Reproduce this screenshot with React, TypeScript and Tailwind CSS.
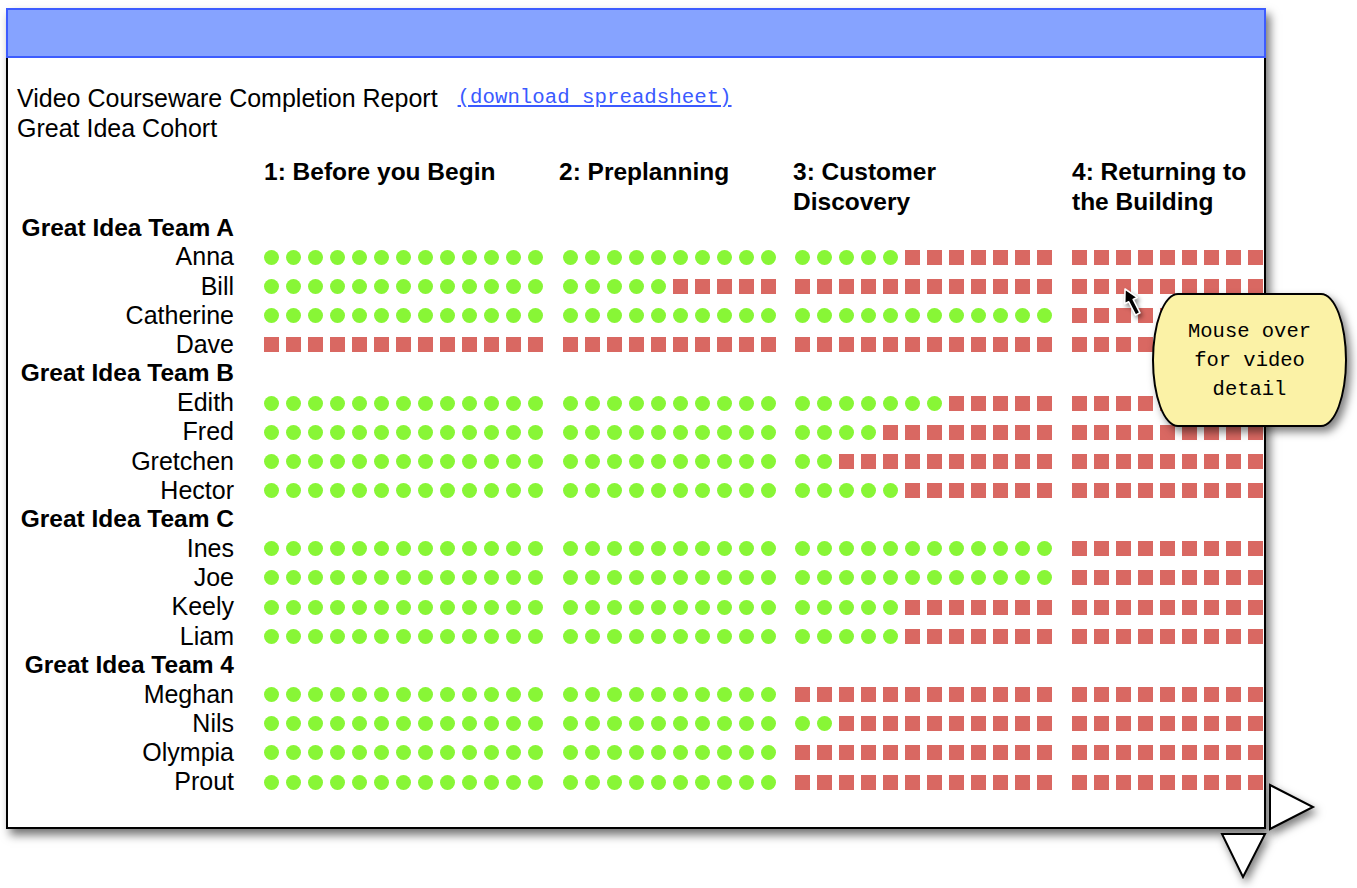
const sizes = [13, 10, 12, 12];

type Person = { name: string; done: number[] };
type Team = { name: string; people: Person[] };

const teams: Team[] = [
  {
    name: "Great Idea Team A",
    people: [
      { name: "Anna", done: [13, 10, 5, 0] },
      { name: "Bill", done: [13, 5, 0, 0] },
      { name: "Catherine", done: [13, 10, 12, 0] },
      { name: "Dave", done: [0, 0, 0, 0] },
    ],
  },
  {
    name: "Great Idea Team B",
    people: [
      { name: "Edith", done: [13, 10, 7, 0] },
      { name: "Fred", done: [13, 10, 4, 0] },
      { name: "Gretchen", done: [13, 10, 2, 0] },
      { name: "Hector", done: [13, 10, 5, 0] },
    ],
  },
  {
    name: "Great Idea Team C",
    people: [
      { name: "Ines", done: [13, 10, 12, 0] },
      { name: "Joe", done: [13, 10, 12, 0] },
      { name: "Keely", done: [13, 10, 5, 0] },
      { name: "Liam", done: [13, 10, 5, 0] },
    ],
  },
  {
    name: "Great Idea Team 4",
    people: [
      { name: "Meghan", done: [13, 10, 0, 0] },
      { name: "Nils", done: [13, 10, 2, 0] },
      { name: "Olympia", done: [13, 10, 0, 0] },
      { name: "Prout", done: [13, 10, 0, 0] },
    ],
  },
];

const colMargins = ["ml-[30px]", "ml-[20px]", "ml-[19px]", "ml-[20px]"];

function Marks({ total, done }: { total: number; done: number }) {
  return (
    <div className="flex shrink-0 gap-[7px]">
      {Array.from({ length: total }).map((_, i) =>
        i < done ? (
          <span key={i} className="block h-[15px] w-[15px] rounded-full bg-[#88f636]" />
        ) : (
          <span key={i} className="block h-[15px] w-[15px] bg-[#d96862]" />
        )
      )}
    </div>
  );
}

export default function App() {
  return (
    <div className="relative min-h-[888px] w-[1357px] overflow-hidden bg-white pl-[6px] pt-[8px] font-['Liberation_Sans',Arial,sans-serif] text-black">
      {/* Window */}
      <div className="w-[1260px] shadow-[4px_6px_9px_rgba(0,0,0,0.55)]">
        <div className="h-[50px] border-2 border-[#3d5cff] bg-[#86a3ff]" />
        <div className="h-[771px] overflow-hidden border-x-2 border-b-2 border-black bg-white pl-[9px] pt-[25px]">
          <div className="flex h-[30px] items-center text-[25px] leading-[30px]">
            <span>Video Courseware Completion Report</span>
            <a
              href="#"
              className="ml-[20px] font-['Liberation_Mono',monospace] text-[20.75px] text-[#3a5aff] underline"
            >
              (download spreadsheet)
            </a>
          </div>
          <div className="text-[25px] leading-[30px]">Great Idea Cohort</div>

          {/* Column headers */}
          <div className="mt-[14px] flex h-[56.5px] text-[24.5px] font-bold leading-[30px] whitespace-nowrap">
            <div className="w-[217px] shrink-0" />
            <div className="ml-[30px] w-[279px] shrink-0">1: Before you Begin</div>
            <div className="ml-[16px] w-[217px] shrink-0">2: Preplanning</div>
            <div className="ml-[17px] w-[259px] shrink-0">
              3: Customer
              <br />
              Discovery
            </div>
            <div className="ml-[20px] shrink-0">
              4: Returning to
              <br />
              the Building
            </div>
          </div>

          {/* Rows */}
          {teams.map((team) => (
            <div key={team.name}>
              <div className="flex h-[29.16px] items-center">
                <div className="w-[217px] shrink-0 whitespace-nowrap text-right text-[24.5px] font-bold">
                  {team.name}
                </div>
              </div>
              {team.people.map((p) => (
                <div key={p.name} className="flex h-[29.16px] items-center">
                  <div className="w-[217px] shrink-0 text-right text-[25px]">{p.name}</div>
                  {sizes.map((n, c) => (
                    <div key={c} className={colMargins[c]}>
                      <Marks total={n} done={p.done[c]} />
                    </div>
                  ))}
                </div>
              ))}
            </div>
          ))}
        </div>
      </div>

      {/* Mouse cursor */}
      <svg
        className="absolute left-[1110px] top-[282px] drop-shadow-[2px_3px_2px_rgba(0,0,0,0.45)]"
        width="40"
        height="44"
        viewBox="0 0 40 44"
      >
        <g transform="translate(8.8 10.2) rotate(-27)">
          <polygon
            points="7,0 0,13 4.5,13 4.5,28 9.5,28 9.5,13 14,13"
            fill="#000"
            stroke="#fff"
            strokeWidth="1.6"
            strokeLinejoin="round"
          />
        </g>
      </svg>

      {/* Callout */}
      <div className="absolute left-[1152px] top-[293px] flex h-[134px] w-[195px] items-center justify-center rounded-[26px/67px] border-2 border-black bg-[#fbf2a6] text-center font-['Liberation_Mono',monospace] text-[20.5px] leading-[29px] shadow-[4px_5px_8px_rgba(0,0,0,0.5)]">
        <div>
          Mouse over
          <br />
          for video
          <br />
          detail
        </div>
      </div>

      {/* Scroll arrows */}
      <svg
        className="absolute left-[1266px] top-[781px] drop-shadow-[3px_5px_4px_rgba(0,0,0,0.5)]"
        width="52"
        height="52"
        viewBox="0 0 52 52"
      >
        <polygon points="4,4 47,26 4,48" fill="#fff" stroke="#000" strokeWidth="2" strokeLinejoin="miter" />
      </svg>
      <svg
        className="absolute left-[1218px] top-[830px] drop-shadow-[3px_5px_4px_rgba(0,0,0,0.5)]"
        width="52"
        height="52"
        viewBox="0 0 52 52"
      >
        <polygon points="4,4 47,4 25,47" fill="#fff" stroke="#000" strokeWidth="2" strokeLinejoin="miter" />
      </svg>
    </div>
  );
}
